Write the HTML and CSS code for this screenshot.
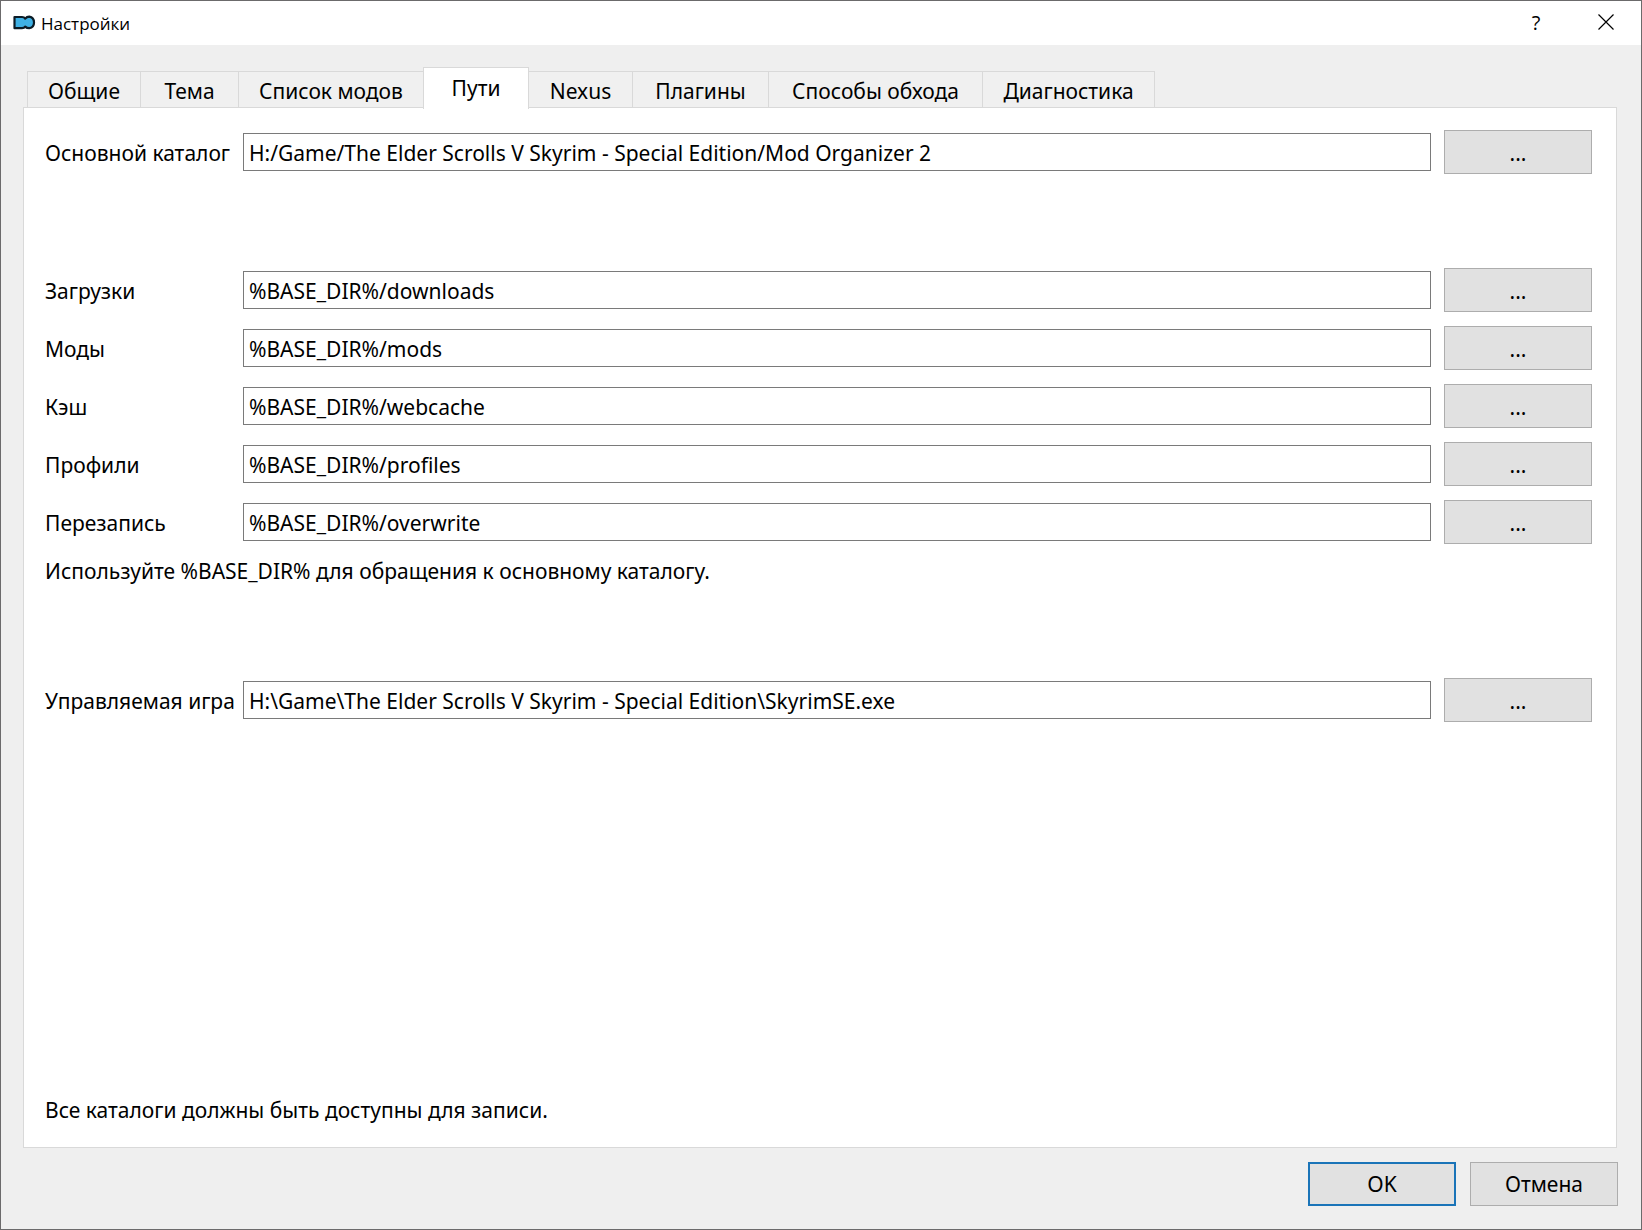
FILE: index.html
```html
<!DOCTYPE html>
<html lang="ru">
<head>
<meta charset="utf-8">
<title>Настройки</title>
<link rel="stylesheet" href="styles.css">
</head>
<body>
<div class="dialog">
  <header class="titlebar">
    <svg class="logo" viewBox="0 0 24 16" aria-hidden="true">
      <path d="M2.500 2H10Q12.200 2 13.200 3.600Q14.800 1.600 17.200 1.600A5.900 5.900 0 0 1 17.200 13.200Q14.800 13.200 13.200 11.600Q12.200 13.200 10 13.200H2.500Z" fill="#3fb1e5" stroke="#0c1c26" stroke-width="2.200" stroke-linejoin="round"/>
    </svg>
    <h1 class="title">Настройки</h1>
    <button class="caption-button" type="button">?</button>
    <button class="caption-button" type="button" aria-label="Закрыть">
      <svg class="close" viewBox="0 0 16 16" aria-hidden="true"><path d="M.5 .5L15.500 15.500M15.500 .5L.5 15.500" stroke="#000" stroke-width="1.200"/></svg>
    </button>
  </header>
  <form class="content">
    <div class="tabs" role="tablist">
      <button class="tab" type="button" role="tab">Общие</button>
      <button class="tab" type="button" role="tab">Тема</button>
      <button class="tab" type="button" role="tab">Список модов</button>
      <button class="tab tab-active" type="button" role="tab" aria-selected="true">Пути</button>
      <button class="tab" type="button" role="tab">Nexus</button>
      <button class="tab" type="button" role="tab">Плагины</button>
      <button class="tab" type="button" role="tab">Способы обхода</button>
      <button class="tab" type="button" role="tab">Диагностика</button>
    </div>
    <section class="pane" role="tabpanel">
      <div class="group">
        <div class="row">
          <label for="base">Основной каталог</label>
          <input class="path" id="base" type="text" value="H:/Game/The Elder Scrolls V Skyrim - Special Edition/Mod Organizer 2">
          <button class="button" type="button">...</button>
        </div>
      </div>
      <div class="group">
        <div class="row">
          <label for="downloads">Загрузки</label>
          <input class="path" id="downloads" type="text" value="%BASE_DIR%/downloads">
          <button class="button" type="button">...</button>
        </div>
        <div class="row">
          <label for="mods">Моды</label>
          <input class="path" id="mods" type="text" value="%BASE_DIR%/mods">
          <button class="button" type="button">...</button>
        </div>
        <div class="row">
          <label for="cache">Кэш</label>
          <input class="path" id="cache" type="text" value="%BASE_DIR%/webcache">
          <button class="button" type="button">...</button>
        </div>
        <div class="row">
          <label for="profiles">Профили</label>
          <input class="path" id="profiles" type="text" value="%BASE_DIR%/profiles">
          <button class="button" type="button">...</button>
        </div>
        <div class="row">
          <label for="overwrite">Перезапись</label>
          <input class="path" id="overwrite" type="text" value="%BASE_DIR%/overwrite">
          <button class="button" type="button">...</button>
        </div>
        <p class="note">Используйте %BASE_DIR% для обращения к основному каталогу.</p>
      </div>
      <div class="group">
        <div class="row">
          <label for="game">Управляемая игра</label>
          <input class="path" id="game" type="text" value="H:\Game\The Elder Scrolls V Skyrim - Special Edition\SkyrimSE.exe">
          <button class="button" type="button">...</button>
        </div>
      </div>
      <p class="note note-bottom">Все каталоги должны быть доступны для записи.</p>
    </section>
    <footer class="actions">
      <button class="button button-default" type="submit">OK</button>
      <button class="button" type="button">Отмена</button>
    </footer>
  </form>
</div>
</body>
</html>
```
FILE: styles.css
```css
* {
  box-sizing: border-box;
}

body {
  margin: 0;
  color: #000;
  font: 21px/26px "Noto Sans", sans-serif;
}

button,
input {
  margin: 0;
  padding: 0;
  color: inherit;
  font: inherit;
}

.dialog {
  display: flex;
  flex-direction: column;
  min-height: 100vh;
  border: 1px solid #6b6a6b;
  background: #efefef;
}

.titlebar {
  display: flex;
  align-items: center;
  height: 44px;
  padding-left: 11px;
  background: #fff;
}

.logo {
  width: 24px;
  height: 16px;
}

.title {
  flex: 1;
  margin: 0 0 0 5px;
  padding-top: 2px;
  font: 17px/24px "Open Sans", sans-serif;
}

.caption-button {
  width: 70px;
  height: 44px;
  border: 0;
  background: none;
  font: 20px/24px "Open Sans", sans-serif;
}

.close {
  width: 16px;
  height: 16px;
}

.content {
  display: flex;
  flex: 1;
  flex-direction: column;
  padding: 22px 23px 23px 22px;
}

.tabs {
  display: grid;
  grid-template-columns: 113px 98px 185px 106px 103px 136px 214px 173px;
  align-items: end;
  height: 41px;
  margin: 0 4px -1px;
}

.tab {
  height: 37px;
  padding-top: 2px;
  border: 1px solid #d9d9d9;
  border-right: 0;
  background: #f0f0f0;
  white-space: nowrap;
}

.tab:last-child {
  border-right: 1px solid #d9d9d9;
}

.tab-active {
  z-index: 1;
  height: 42px;
  margin-bottom: -1px;
  padding: 0 0 1px;
  border-right: 1px solid #d9d9d9;
  border-bottom: 0;
  background: #fff;
}

.tab-active + .tab {
  border-left: 0;
}

.pane {
  display: flex;
  flex: 1;
  flex-direction: column;
  gap: 94px;
  margin-right: 1px;
  padding: 22px 24px 24px 21px;
  border: 1px solid #d9d9d9;
  background: #fff;
}

.group {
  display: flex;
  flex-direction: column;
  gap: 14px;
}

.row {
  display: grid;
  grid-template-columns: 185px 1fr 148px;
  align-items: center;
  gap: 13px;
}

.row label {
  padding-top: 2px;
  white-space: nowrap;
}

.path {
  height: 38px;
  min-width: 0;
  padding: 2px 5px 0;
  border: 1px solid #7a7a7a;
  background: #fff;
}

.button {
  width: 148px;
  height: 44px;
  border: 1px solid #adadad;
  background: #e1e1e1;
}

.row .button {
  padding-top: 2px;
}

.button-default {
  border: 2px solid #1a74b8;
}

.note {
  margin: 0;
}

.note-bottom {
  margin-top: auto;
}

.actions {
  display: flex;
  justify-content: flex-end;
  gap: 14px;
  padding-top: 14px;
}
```
